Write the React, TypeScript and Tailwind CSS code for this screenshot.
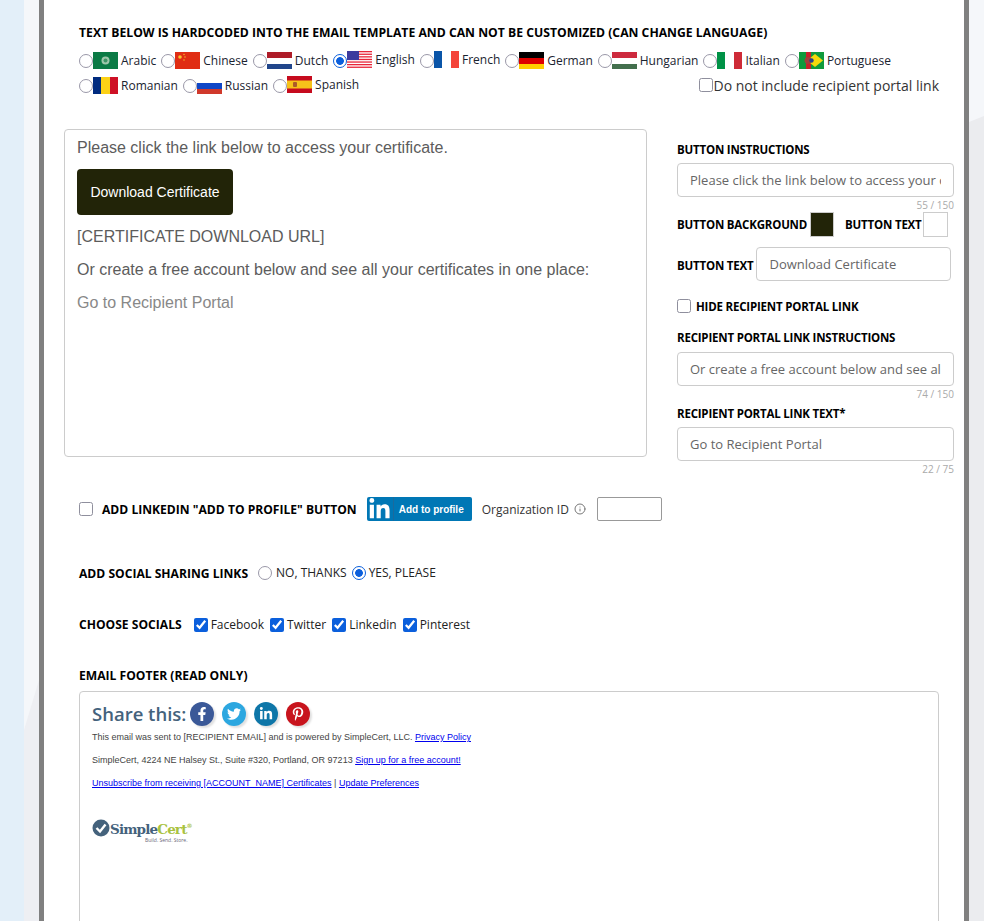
import React from "react";
import { FaFacebookF, FaTwitter, FaLinkedinIn, FaPinterestP } from "react-icons/fa";
import { Info } from "lucide-react";

const F = ({ children }: { children: React.ReactNode }) => (
  <svg width="25" height="17" viewBox="0 0 25 17" className="shrink-0">{children}</svg>
);

const flags: Record<string, React.ReactNode> = {
  Arabic: <F><rect width="25" height="17" fill="#0b7a45" /><circle cx="12.5" cy="8.5" r="4" fill="#9fc7ab" /><circle cx="12.5" cy="8.5" r="2" fill="#3f9467" /></F>,
  Chinese: <F><rect width="25" height="17" fill="#e02d13" /><circle cx="5" cy="5" r="1.8" fill="#f7c62f" /><circle cx="9" cy="2.5" r=".7" fill="#f7c62f" /><circle cx="10" cy="5" r=".7" fill="#f7c62f" /><circle cx="9" cy="8" r=".7" fill="#f7c62f" /></F>,
  Dutch: <F><rect width="25" height="6" fill="#ae1c28" /><rect y="6" width="25" height="6" fill="#fff" /><rect y="12" width="25" height="5" fill="#21468b" /></F>,
  English: <F><rect width="25" height="17" fill="#fff" />{[0, 2.6, 5.2, 7.8, 10.4, 13, 15.6].map((y) => <rect key={y} y={y} width="25" height="1.3" fill="#e8263a" />)}<rect width="12" height="9" fill="#3c3b9e" /></F>,
  French: <F><rect width="8" height="17" fill="#0a55a8" /><rect x="8" width="9" height="17" fill="#fff" /><rect x="17" width="8" height="17" fill="#f4443a" /></F>,
  German: <F><rect width="25" height="6" fill="#000" /><rect y="6" width="25" height="6" fill="#dd0000" /><rect y="12" width="25" height="5" fill="#ffce00" /></F>,
  Hungarian: <F><rect width="25" height="6" fill="#cd2a3e" /><rect y="6" width="25" height="6" fill="#fff" /><rect y="12" width="25" height="5" fill="#436f4d" /></F>,
  Italian: <F><rect width="8" height="17" fill="#009246" /><rect x="8" width="9" height="17" fill="#fff" /><rect x="17" width="8" height="17" fill="#ce2b37" /></F>,
  Portuguese: <F><rect width="25" height="17" fill="#0f9a3c" /><rect x="7" width="5" height="17" fill="#c8202a" /><polygon points="8,8.5 16,2 24,8.5 16,15" fill="#f4d90b" /><circle cx="9" cy="8.5" r="3.4" fill="#a33e3a" /><circle cx="12.5" cy="8.5" r="2.2" fill="#27408b" /></F>,
  Romanian: <F><rect width="8" height="17" fill="#002b7f" /><rect x="8" width="9" height="17" fill="#fcd116" /><rect x="17" width="8" height="17" fill="#ce1126" /></F>,
  Russian: <F><rect width="25" height="6" fill="#fff" /><rect y="6" width="25" height="6" fill="#0f47c7" /><rect y="12" width="25" height="5" fill="#d0392b" /></F>,
  Spanish: <F><rect width="25" height="17" fill="#c60b1e" /><rect y="4.5" width="25" height="8" fill="#f6c21a" /><rect x="6" y="6" width="4" height="5" rx="1" fill="#ad5a28" /></F>,
};

const Radio = ({ name, checked }: { name: string; checked?: boolean }) => (
  <input
    type="radio"
    name={name}
    defaultChecked={checked}
    className="appearance-none shrink-0 w-[14px] h-[14px] rounded-full border-[1.5px] border-[#9a98a8] bg-white checked:border-[#0b5fdc] checked:bg-[radial-gradient(circle,#0b5fdc_0,#0b5fdc_3.5px,#fff_4.2px)]"
  />
);

const Box = () => (
  <input
    type="checkbox"
    className="appearance-none shrink-0 w-[14px] h-[14px] rounded-[2.5px] border-[1.5px] border-[#8f8f9d] bg-white"
  />
);

const Lang = ({ name, checked, raised }: { name: string; checked?: boolean; raised?: boolean }) => (
  <label className="flex items-center">
    <Radio name="lang" checked={checked} />
    <span className={`flex items-center ${raised ? "mb-[2px]" : ""}`}>
      {flags[name]}
      <span className="ml-[3px] mr-[5px] text-[12px] text-[#1a2330]">{name}</span>
    </span>
  </label>
);

const Label = ({ children, className = "" }: { children: React.ReactNode; className?: string }) => (
  <span className={`font-bold text-[11.5px] tracking-[-0.2px] text-black whitespace-nowrap ${className}`}>{children}</span>
);

const BigLabel = ({ children, className = "" }: { children: React.ReactNode; className?: string }) => (
  <span className={`font-bold text-[12.1px] text-black whitespace-nowrap ${className}`}>{children}</span>
);

const Field = ({ value, className = "" }: { value: string; className?: string }) => (
  <input
    readOnly
    value={value}
    className={`h-[34px] px-3 rounded-[4px] border border-[#ccc] bg-white text-[13px] text-[#666] ${className}`}
  />
);

const Count = ({ children }: { children: React.ReactNode }) => (
  <div className="mt-[1px] text-right text-[10px] leading-[14px] text-[#aaa]">{children}</div>
);

const Social = ({ bg, children }: { bg: string; children: React.ReactNode }) => (
  <span className={`w-6 h-6 rounded-full flex items-center justify-center text-white text-[14px] shadow-[2px_2px_2px_rgba(0,0,0,0.12)] ${bg}`}>
    {children}
  </span>
);

const Check = ({ name }: { name: string }) => (
  <label className="flex items-center gap-[3px]">
    <input type="checkbox" defaultChecked className="w-[14px] h-[14px] accent-[#0b5fdc]" />
    <span className="text-[12px] text-[#222]">{name}</span>
  </label>
);

export default function App() {
  return (
    <div className="relative w-[984px] h-[921px] overflow-hidden bg-[#f5f7fa] font-['Open_Sans',sans-serif]">
      <svg className="absolute inset-0" width="984" height="921" viewBox="0 0 984 921">
        <polygon points="39,680 24,730 24,921 39,921" fill="#eeeff3" />
        <polygon points="969,122 984,116 984,921 969,921" fill="#ebecef" />
      </svg>
      <div className="relative flex h-full">
        <div className="w-6 bg-[#e3eff9] shrink-0" />
        <div className="ml-[15px] w-[930px] h-full border-x-[5px] border-[#808080] bg-white shrink-0">
          <div className="pl-[35px] pt-[25px]">
            <div className="font-bold text-[12.2px] leading-4 text-black whitespace-nowrap">
              TEXT BELOW IS HARDCODED INTO THE EMAIL TEMPLATE AND CAN NOT BE CUSTOMIZED (CAN CHANGE LANGUAGE)
            </div>
            <div className="mt-[7px] flex h-[25px] items-center">
              {["Arabic", "Chinese", "Dutch"].map((n) => <Lang key={n} name={n} />)}
              <Lang name="English" checked raised />
              <Lang name="French" raised />
              {["German", "Hungarian", "Italian", "Portuguese"].map((n) => <Lang key={n} name={n} />)}
            </div>
            <div className="flex h-[25px] items-center">
              {["Romanian", "Russian"].map((n) => <Lang key={n} name={n} />)}
              <Lang name="Spanish" raised />
              <label className="ml-auto mr-[25px] mb-[1px] flex items-center text-[14px] text-[#333]">
                <Box />
                Do not include recipient portal link
              </label>
            </div>
          </div>

          <div className="mt-[31px] ml-[20px] flex">
            <div className="w-[583px] h-[328px] shrink-0 rounded-[4px] border border-[#ccc] pl-3 pt-[8px] font-['Liberation_Sans',sans-serif] text-[16px] leading-[20px]">
              <div className="text-[#5c5c5c]">Please click the link below to access your certificate.</div>
              <div className="mt-[11px] w-[156px] h-[46px] rounded-[4px] bg-[#222408] text-white text-[14px] flex items-center justify-center">
                Download Certificate
              </div>
              <div className="mt-[12px] text-[#5c5c5c]">[CERTIFICATE DOWNLOAD URL]</div>
              <div className="mt-[13px] text-[#5c5c5c]">Or create a free account below and see all your certificates in one place:</div>
              <div className="mt-[13px] text-[#888]">Go to Recipient Portal</div>
            </div>
            <div className="ml-[30px] w-[277px] shrink-0">
              <div className="mt-[13px] leading-4 flex"><Label>BUTTON INSTRUCTIONS</Label></div>
              <Field value="Please click the link below to access your certificate." className="mt-[5px] w-full" />
              <Count>55 / 150</Count>
              <div className="flex items-center h-[25px]">
                <Label>BUTTON BACKGROUND</Label>
                <span className="ml-[3px] w-[24px] h-[25px] border border-[#ccc] bg-[#222408]" />
                <Label className="ml-[11px]">BUTTON TEXT</Label>
                <span className="ml-[1px] w-[25px] h-[25px] border border-[#ccc] bg-white" />
              </div>
              <div className="mt-[10px] flex items-center">
                <Label className="mt-[3px]">BUTTON TEXT</Label>
                <Field value="Download Certificate" className="ml-[3px] w-[195px]" />
              </div>
              <label className="mt-[17px] flex items-center h-4">
                <Box />
                <Label className="ml-[5px] mt-[2px]">HIDE RECIPIENT PORTAL LINK</Label>
              </label>
              <div className="mt-[16px] leading-4 flex"><Label>RECIPIENT PORTAL LINK INSTRUCTIONS</Label></div>
              <Field value="Or create a free account below and see all your certificates in one place:" className="mt-[6px] w-full" />
              <Count>74 / 150</Count>
              <div className="mt-[5px] leading-4 flex"><Label>RECIPIENT PORTAL LINK TEXT*</Label></div>
              <Field value="Go to Recipient Portal" className="mt-[5px] w-full" />
              <Count>22 / 75</Count>
            </div>
          </div>

          <div className="pl-[35px]">
            <div className="mt-[21px] flex items-center h-[24px]">
              <Box />
              <BigLabel className="ml-[9px] mt-[2px]">ADD LINKEDIN "ADD TO PROFILE" BUTTON</BigLabel>
              <div className="ml-[10px] w-[105px] h-[24px] rounded-[2px] bg-[#0077b5] flex items-center text-white font-['Liberation_Sans',sans-serif]">
                <span className="w-[27px] h-full border-r border-[#1c6a9c] flex items-center justify-center"><FaLinkedinIn className="text-[23px]" /></span>
                <span className="ml-[5px] text-[10px] font-bold">Add to profile</span>
              </div>
              <span className="ml-[10px] mt-[2px] text-[12px] text-[#333]">Organization ID</span>
              <Info size={12} className="ml-[5px] text-[#777]" />
              <input readOnly className="ml-[11px] w-[65px] h-[24px] border border-[#999] rounded-[2px]" />
            </div>

            <div className="mt-[40px] flex items-center h-[24px]">
              <BigLabel className="mt-[2px]">ADD SOCIAL SHARING LINKS</BigLabel>
              <label className="ml-[10px] flex items-center gap-[4px]">
                <Radio name="s" />
                <span className="text-[12px] text-[#222]">NO, THANKS</span>
              </label>
              <label className="ml-[5px] flex items-center gap-[3px]">
                <Radio name="s" checked />
                <span className="text-[12px] text-[#222]">YES, PLEASE</span>
              </label>
            </div>

            <div className="mt-[28px] flex items-center h-[24px]">
              <BigLabel>CHOOSE SOCIALS</BigLabel>
              <div className="ml-[12px] flex gap-[6px]">
                {["Facebook", "Twitter", "Linkedin", "Pinterest"].map((n) => <Check key={n} name={n} />)}
              </div>
            </div>

            <div className="mt-[31px] h-[16px] leading-4 flex"><BigLabel>EMAIL FOOTER (READ ONLY)</BigLabel></div>

            <div className="mt-[7px] w-[860px] h-[400px] rounded-t-[4px] border border-[#ccc] pl-3 pt-[10px]">
              <div className="flex items-center h-6">
                <span className="text-[18.5px] font-semibold text-[#44627c] mr-[4px]">Share this:</span>
                <div className="flex gap-2">
                  <Social bg="bg-[#3b5998]"><FaFacebookF /></Social>
                  <Social bg="bg-[#2ca7e0]"><FaTwitter /></Social>
                  <Social bg="bg-[#0e76a8]"><FaLinkedinIn /></Social>
                  <Social bg="bg-[#c8141d]"><FaPinterestP /></Social>
                </div>
              </div>
              <div className="font-['Liberation_Sans',sans-serif] text-[9px] leading-[12px] text-[#444]">
                <div className="mt-[5px]">This email was sent to [RECIPIENT EMAIL] and is powered by SimpleCert, LLC. <span className="text-[#0000ee] underline">Privacy Policy</span></div>
                <div className="mt-[11px]">SimpleCert, 4224 NE Halsey St., Suite #320, Portland, OR 97213 <span className="text-[#0000ee] underline">Sign up for a free account!</span></div>
                <div className="mt-[11px]"><span className="text-[#0000ee] underline">Unsubscribe from receiving [ACCOUNT_NAME] Certificates</span> | <span className="text-[#0000ee] underline">Update Preferences</span></div>
              </div>
              <div className="mt-[29px] flex items-start">
                <svg width="18" height="18" viewBox="0 0 18 18" className="mt-[1px] shrink-0">
                  <circle cx="9" cy="9" r="8.5" fill="#44627c" />
                  <path d="M4.5 9 L8 12.5 L13.5 5.5" fill="none" stroke="#fff" strokeWidth="2.4" />
                </svg>
                <div>
                  <div className="font-['DejaVu_Serif',serif] font-bold text-[13.5px] leading-[15px] tracking-[-0.85px] whitespace-nowrap">
                    <span className="text-[#44627c]">Simple</span><span className="text-[#a9c23f]">Cert</span><span className="text-[6px] align-super text-[#a9c23f]">®</span>
                  </div>
                  <div className="ml-[35px] text-[5px] leading-[6px] text-[#667] whitespace-nowrap">Build. Send. Store.</div>
                </div>
              </div>
            </div>
          </div>
        </div>
      </div>
    </div>
  );
}
